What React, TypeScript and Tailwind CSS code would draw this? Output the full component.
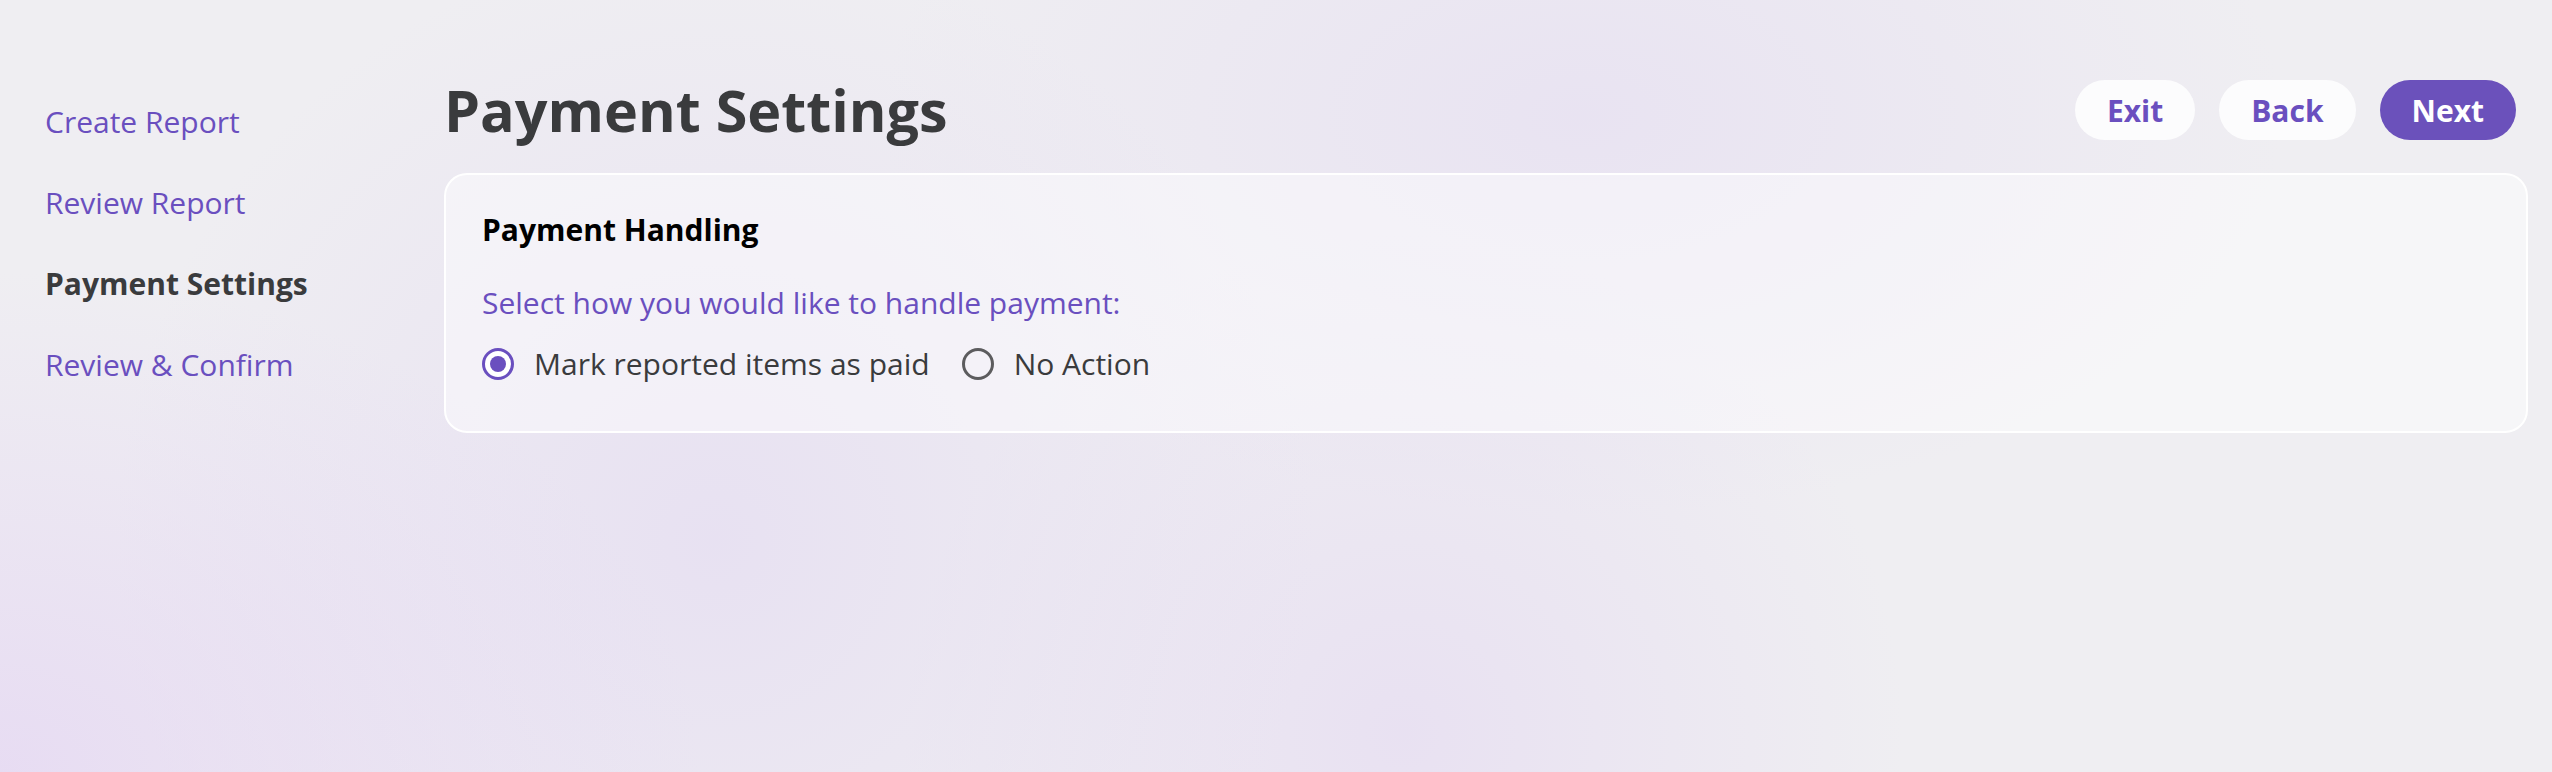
import { useState } from "react";

const STEPS = [
  { label: "Create Report", active: false },
  { label: "Review Report", active: false },
  { label: "Payment Settings", active: true },
  { label: "Review & Confirm", active: false },
];

const OPTIONS = [
  { value: "paid", label: "Mark reported items as paid" },
  { value: "none", label: "No Action" },
];

function Radio({
  checked,
  label,
  onSelect,
}: {
  checked: boolean;
  label: string;
  onSelect: () => void;
}) {
  return (
    <label
      onClick={onSelect}
      className="flex items-center gap-5 cursor-pointer text-[30px] leading-[40px] text-[#3a3b3d]"
    >
      <span
        className={
          checked
            ? "flex items-center justify-center w-[32px] h-[32px] rounded-full border-[3px] border-[#6a4fbf] bg-white"
            : "flex items-center justify-center w-[32px] h-[32px] rounded-full border-[3px] border-[#5c5c5e]"
        }
      >
        {checked && <span className="w-[16px] h-[16px] rounded-full bg-[#6a4fbf]" />}
      </span>
      {label}
    </label>
  );
}

export default function App() {
  const [choice, setChoice] = useState("paid");

  return (
    <div className="min-h-screen w-full font-['Open_Sans',sans-serif] bg-[#efeef2] bg-[radial-gradient(ellipse_700px_500px_at_0%_100%,rgba(226,208,243,0.6),transparent),radial-gradient(ellipse_600px_600px_at_28%_70%,rgba(224,212,242,0.5),transparent),radial-gradient(ellipse_500px_500px_at_55%_95%,rgba(226,212,242,0.5),transparent),radial-gradient(ellipse_700px_400px_at_62%_15%,rgba(226,216,242,0.5),transparent)]">
      <div className="flex">
        <nav className="w-[444px] shrink-0 pl-[45px] pt-[102px]">
          <ul className="flex flex-col gap-[41px]">
            {STEPS.map((s) => (
              <li
                key={s.label}
                className={
                  s.active
                    ? "text-[30px] leading-[40px] font-bold text-[#3a3b3d]"
                    : "text-[30px] leading-[40px] text-[#6a4fbf]"
                }
              >
                {s.label}
              </li>
            ))}
          </ul>
        </nav>

        <main className="flex-1 pr-[24px] pt-[74px]">
          <div className="flex items-center justify-between pr-[12px]">
            <h1 className="text-[57.5px] leading-[72px] font-bold text-[#3a3b3d]">
              Payment Settings
            </h1>
            <div className="flex items-center gap-[24px]">
              <button className="h-[60px] px-[32px] rounded-full bg-[#fcfcfd] text-[30px] font-bold text-[#6a4fbf]">
                Exit
              </button>
              <button className="h-[60px] px-[32px] rounded-full bg-[#fcfcfd] text-[30px] font-bold text-[#6a4fbf]">
                Back
              </button>
              <button className="h-[60px] px-[32px] rounded-full bg-[#6b51bb] text-[30px] font-bold text-white">
                Next
              </button>
            </div>
          </div>

          <section className="mt-[27px] rounded-[23px] border-2 border-white bg-white/45 px-[36px] pt-[35px] pb-[47px]">
            <h2 className="text-[30px] leading-[40px] font-bold text-black">
              Payment Handling
            </h2>
            <p className="mt-[33px] text-[30px] leading-[40px] text-[#6a4fbf]">
              Select how you would like to handle payment:
            </p>
            <div className="mt-[21px] flex items-center gap-8">
              {OPTIONS.map((o) => (
                <Radio
                  key={o.value}
                  checked={choice === o.value}
                  label={o.label}
                  onSelect={() => setChoice(o.value)}
                />
              ))}
            </div>
          </section>
        </main>
      </div>
    </div>
  );
}
